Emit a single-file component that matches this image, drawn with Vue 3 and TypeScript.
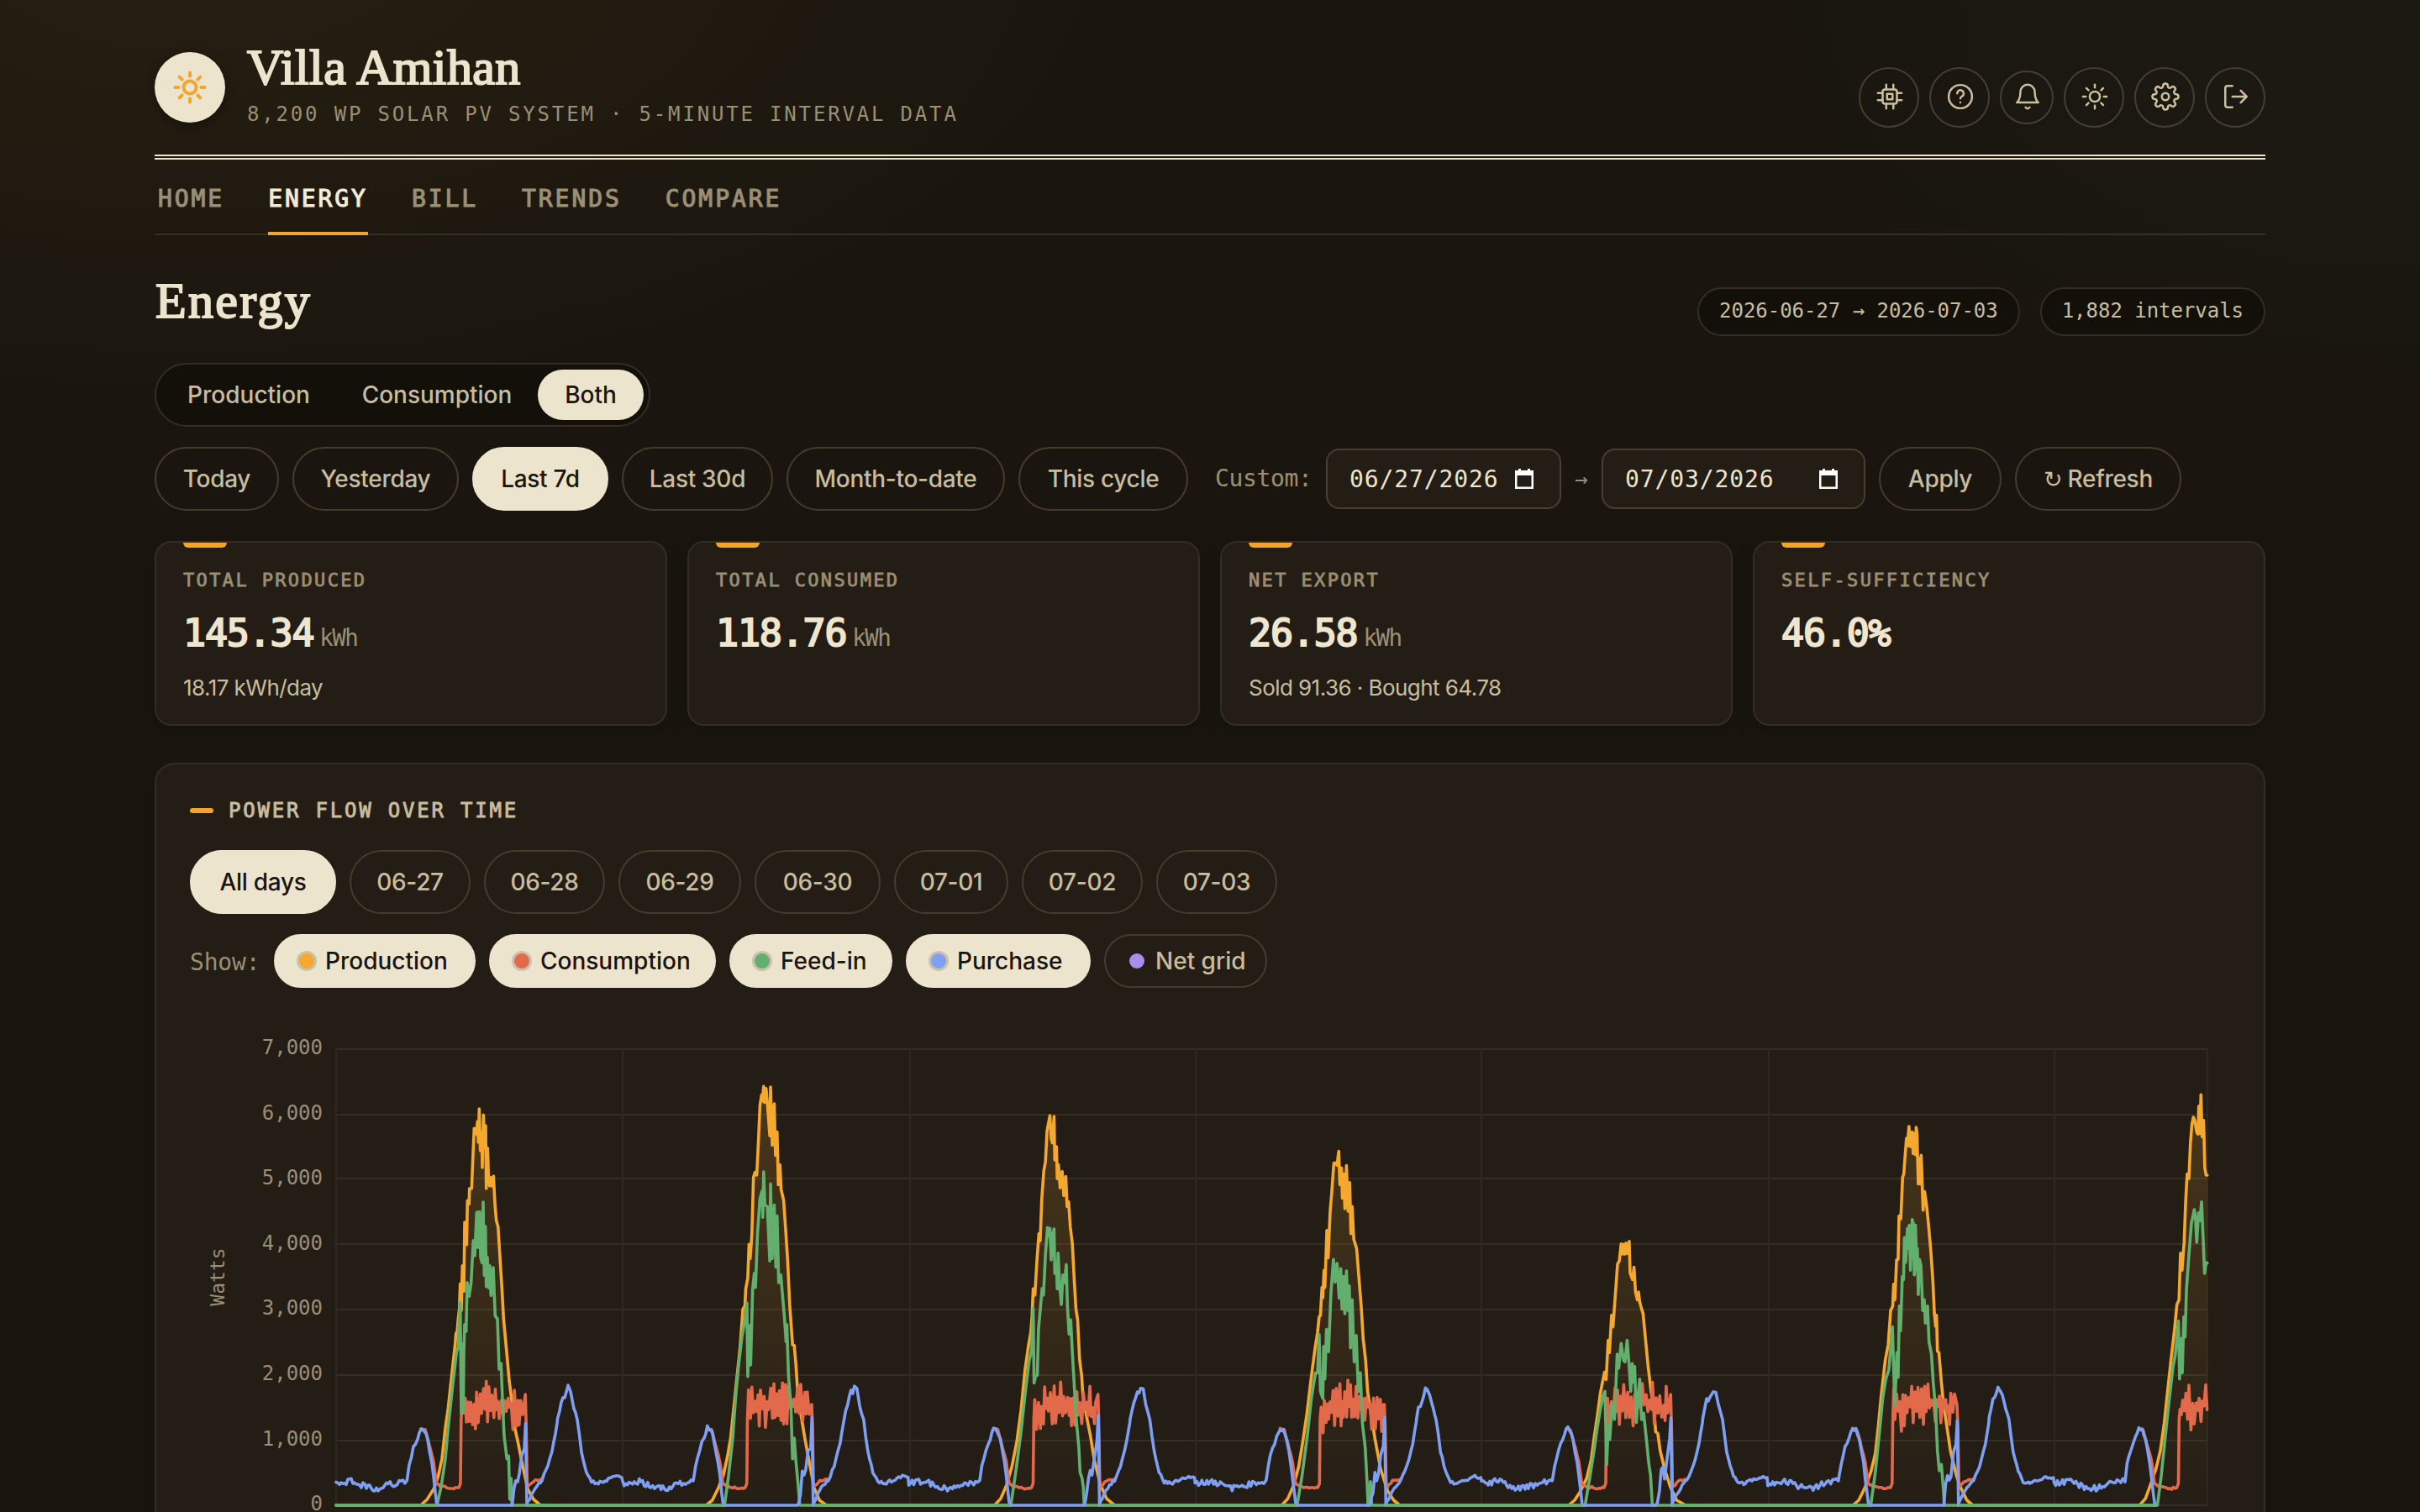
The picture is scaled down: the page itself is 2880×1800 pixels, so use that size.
<script setup lang="ts">
type Point = [number, number]
interface Pill { label: string; width: number; active?: boolean }
interface Toggle extends Pill { color: string }
interface Stat { label: string; value: string; unit?: string; note?: string }
interface Trace { x: number; y: number; sx: number; sy: number; production: number[]; feedIn: number[] }

const tabs: string[] = ['Home', 'Energy', 'Bill', 'Trends', 'Compare']

const modes: Pill[] = [
  { label: 'Production', width: 208 },
  { label: 'Consumption', width: 240 },
  { label: 'Both', width: 126, active: true },
]

const ranges: Pill[] = [
  { label: 'Today', width: 148 },
  { label: 'Yesterday', width: 198 },
  { label: 'Last 7d', width: 162, active: true },
  { label: 'Last 30d', width: 180 },
  { label: 'Month-to-date', width: 260 },
  { label: 'This cycle', width: 202 },
]

const days: Pill[] = [
  { label: 'All days', width: 174, active: true },
  { label: '06-27', width: 144 },
  { label: '06-28', width: 144 },
  { label: '06-29', width: 146 },
  { label: '06-30', width: 150 },
  { label: '07-01', width: 136 },
  { label: '07-02', width: 144 },
  { label: '07-03', width: 144 },
]

const toggles: Toggle[] = [
  { label: 'Production', width: 240, color: '#f5a82e', active: true },
  { label: 'Consumption', width: 270, color: '#e2694a', active: true },
  { label: 'Feed-in', width: 194, color: '#63b06e', active: true },
  { label: 'Purchase', width: 220, color: '#7f9ff2', active: true },
  { label: 'Net grid', width: 194, color: '#a98cec' },
]

const stats: Stat[] = [
  { label: 'Total produced', value: '145.34', unit: 'kWh', note: '18.17 kWh/day' },
  { label: 'Total consumed', value: '118.76', unit: 'kWh' },
  { label: 'Net export', value: '26.58', unit: 'kWh', note: 'Sold 91.36 · Bought 64.78' },
  { label: 'Self-sufficiency', value: '46.0%' },
]

/* Chart geometry, in page pixels; the svg's viewBox starts at the panel's inner edge. */
const LEFT = 400
const RIGHT = 2627
const ZERO = 1792
const DAY = 340.75
const gridY: number[] = [1249, 1327, 1403, 1481, 1559, 1637, 1715, 1792]
const yLabels: string[] = ['7,000', '6,000', '5,000', '4,000', '3,000', '2,000', '1,000', '0']
const gridX: number[] = [400, 741, 1083, 1423, 1763, 2105, 2445, 2627]

const traces: Trace[] = [
  {
    x: 480, y: 1300, sx: 3, sy: 3,
    production: [62,1474,85,1455,110,1415,125,1370,138,1310,150,1200,160,1130,172,1020,185,900,188,862,192,858,196,812,200,775,203,685,207,780,211,620,216,712,219,465,226,545,229,388,235,400,236,345,244,345,249,220,253,130,260,150,265,105,268,180,271,60,275,210,280,145,282,270,286,82,291,200,294,120,296,345,301,200,304,300,308,335,313,305,316,336,322,300,327,400,332,460,338,480,345,590,352,700,358,810,368,920,378,1030,388,1110,398,1200,410,1255,425,1330,445,1420,465,1455,490,1474],
    feedIn: [120,1474,135,1410,150,1310,160,1200,175,1060,190,930,196,910,203,752,207,1148,211,900,214,1140,216,930,219,830,224,855,228,680,235,730,242,680,250,530,255,585,262,430,265,555,267,428,270,555,273,428,276,590,281,610,285,393,289,655,293,480,296,695,300,590,305,700,309,620,313,727,317,640,319,720,321,627,328,800,336,810,342,990,349,970,354,1100,360,1230,370,1310,376,1300,380,1455,385,1380,388,1474],
  },
  {
    x: 220, y: 1220, sx: 2.063, sy: 2.7034,
    production: [1280,1543,1295,1530,1310,1490,1322,1450,1332,1390,1340,1330,1348,1230,1355,1140,1363,1040,1370,915,1375,905,1377,850,1382,815,1385,706,1388,752,1392,680,1396,490,1400,475,1404,484,1408,380,1412,260,1416,225,1418,245,1421,198,1423,250,1427,205,1430,250,1436,357,1438,200,1442,388,1447,254,1450,420,1454,345,1457,515,1461,450,1464,530,1470,565,1475,660,1480,760,1485,900,1492,1030,1496,1032,1500,1090,1505,1190,1512,1250,1522,1330,1532,1400,1545,1490,1558,1530,1575,1543],
    feedIn: [1325,1543,1335,1450,1345,1330,1352,1200,1360,1090,1368,1000,1374,960,1380,895,1382,1132,1386,968,1389,1095,1394,850,1398,800,1401,845,1406,670,1412,560,1417,535,1419,620,1421,473,1424,580,1430,585,1436,760,1438,512,1442,752,1447,580,1451,780,1454,615,1458,830,1463,805,1467,865,1472,940,1476,1020,1478,965,1482,1130,1488,1230,1492,1397,1496,1330,1500,1400,1505,1470,1510,1543],
  },
  {
    x: 980, y: 1220, sx: 2.063, sy: 2.7034,
    production: [420,1543,435,1525,450,1480,463,1420,475,1340,485,1240,495,1110,503,1035,509,990,512,940,515,850,519,870,524,760,529,672,532,695,536,560,541,470,545,440,549,340,556,292,559,365,562,380,566,295,568,435,572,392,574,495,577,450,581,525,586,472,590,550,595,488,598,585,602,570,606,650,611,705,616,830,620,915,624,950,629,1080,634,1130,637,1195,645,1255,655,1320,665,1400,680,1480,695,1525,715,1543],
    feedIn: [460,1543,472,1440,485,1310,495,1190,505,1080,511,1050,515,912,517,1153,521,1130,525,1128,528,980,537,848,540,870,545,740,550,652,553,680,556,655,559,757,562,680,566,657,568,800,572,770,574,850,576,735,580,840,584,900,588,805,592,830,596,772,599,910,603,995,607,950,611,1055,617,1190,621,1275,627,1360,630,1440,635,1460,638,1490,640,1543],
  },
  {
    x: 980, y: 1220, sx: 2.063, sy: 2.7034,
    production: [1125,1543,1140,1525,1155,1480,1167,1420,1177,1340,1187,1250,1198,1130,1207,1040,1213,990,1217,940,1220,935,1224,845,1226,878,1229,790,1231,845,1236,662,1239,750,1244,600,1248,540,1253,445,1258,445,1261,452,1265,407,1268,515,1272,460,1274,558,1277,480,1280,592,1284,453,1288,600,1292,508,1295,672,1298,585,1302,690,1309,720,1315,820,1320,900,1325,1010,1331,1080,1336,1180,1345,1260,1355,1340,1368,1430,1385,1500,1400,1530,1415,1543],
    feedIn: [1163,1543,1175,1450,1188,1320,1198,1200,1208,1120,1213,1120,1217,997,1220,1180,1226,1203,1228,1035,1231,1140,1235,980,1240,1052,1246,860,1252,755,1256,828,1261,768,1266,880,1270,785,1273,915,1277,810,1280,930,1284,792,1288,920,1291,840,1294,1040,1298,885,1303,1085,1308,1000,1313,1180,1318,1120,1323,1280,1330,1360,1335,1480,1337,1543,1343,1470,1346,1543],
  },
  {
    x: 1740, y: 1220, sx: 2.8, sy: 2.7034,
    production: [355,1543,375,1530,395,1500,415,1460,430,1400,440,1330,452,1250,460,1190,468,1150,475,1118,480,1142,487,1015,491,1055,498,935,503,972,510,880,518,770,524,760,530,705,534,738,538,706,542,738,546,702,550,736,557,697,560,800,568,820,573,780,578,860,584,885,588,860,592,892,597,910,603,930,612,1020,620,1100,630,1180,640,1245,645,1310,652,1315,660,1370,675,1430,695,1490,715,1530,745,1543],
    feedIn: [410,1543,425,1460,440,1370,450,1300,460,1240,470,1195,476,1180,482,1415,487,1290,492,1335,500,1220,508,1270,517,1060,522,1105,530,1025,538,1080,543,1085,550,1015,556,1090,562,1180,567,1090,571,1150,575,1100,581,1280,586,1200,592,1140,598,1270,605,1250,615,1340,622,1410,628,1450,634,1543],
  },
  {
    x: 2180, y: 1220, sx: 2.8, sy: 2.7034,
    production: [70,1543,90,1530,110,1490,130,1440,145,1380,155,1290,165,1190,178,1080,184,1050,188,1030,196,920,203,905,206,835,210,885,216,757,221,755,224,615,230,625,236,490,240,480,243,437,249,365,252,390,257,327,262,392,268,345,271,415,275,350,279,418,281,330,284,350,288,512,292,430,295,512,298,420,304,597,309,537,315,575,322,640,330,730,337,830,342,930,346,970,349,935,352,1050,357,1055,365,1150,372,1220,380,1270,395,1370,415,1450,430,1490,450,1530,470,1543],
    feedIn: [130,1543,145,1440,160,1300,170,1200,180,1140,190,1110,202,972,210,1225,217,1055,221,1135,225,905,229,985,235,810,239,820,242,685,246,765,252,655,255,720,258,645,262,790,268,627,272,640,275,805,279,645,283,790,285,720,288,868,292,755,297,775,303,920,308,885,312,960,319,905,324,1020,332,1060,338,1150,346,1240,352,1370,358,1435,365,1415,372,1500,375,1543],
  },
  {
    x: 2180, y: 1220, sx: 2.8, sy: 2.7034,
    production: [1025,1543,1045,1525,1062,1480,1080,1430,1095,1370,1108,1280,1120,1170,1130,1080,1142,980,1150,900,1157,885,1162,735,1167,790,1174,700,1179,570,1184,480,1190,495,1195,380,1200,320,1205,297,1210,310,1216,345,1220,352,1223,262,1226,350,1230,225,1234,360,1239,308,1243,460,1247,484,1251,484],
    feedIn: [1085,1543,1098,1450,1112,1320,1125,1200,1137,1100,1145,1060,1155,953,1159,1140,1164,1010,1168,1120,1173,940,1177,1005,1182,850,1190,740,1198,640,1208,595,1212,625,1216,700,1222,605,1227,630,1232,570,1237,680,1242,800,1247,765,1251,767],
  },
]

let seed = 20260627
const noise = (): number => {
  seed = (seed * 1664525 + 1013904223) % 4294967296
  return (seed / 4294967296) * 2 - 1
}

const decode = (trace: Trace, values: number[]): Point[] => {
  const points: Point[] = []
  for (let i = 0; i < values.length; i += 2) {
    const y = trace.y + values[i + 1] / trace.sy
    points.push([trace.x + values[i] / trace.sx, y > ZERO - 1.6 ? ZERO : y])
  }
  return points
}

/* Walks between anchors in short steps, adding a little jitter. */
const walk = (start: number, anchors: Point[], jitter: number): Point[] => {
  const out: Point[] = []
  for (let i = 0; i < anchors.length - 1; i++) {
    const [x0, y0] = anchors[i]
    const [x1, y1] = anchors[i + 1]
    const steps = Math.max(1, Math.round((x1 - x0) / 2.1))
    for (let s = 0; s < steps; s++) {
      const t = s / steps
      const y = y0 + (y1 - y0) * t
      out.push([start + x0 + (x1 - x0) * t, y >= ZERO - 1 ? ZERO : Math.min(ZERO, y + noise() * jitter)])
    }
  }
  const last = anchors[anchors.length - 1]
  out.push([start + last[0], last[1]])
  return out
}

const path = (points: Point[]): string =>
  points
    .filter((p) => p[0] <= RIGHT)
    .map((p, i) => `${i ? 'L' : 'M'}${p[0].toFixed(1)} ${p[1].toFixed(1)}`)
    .join('')

const withBaseline = (key: 'production' | 'feedIn'): Point[] => {
  const points: Point[] = [[LEFT, ZERO]]
  traces.forEach((trace) => points.push(...decode(trace, trace[key])))
  return points
}

const productionPath = path(withBaseline('production'))
const productionArea = `${productionPath}L${RIGHT} ${ZERO}L${LEFT} ${ZERO}Z`
const feedInPath = path(withBaseline('feedIn'))

const purchase: Point[] = []
const gridIdle: Point[] = []
const consumptionPaths: string[] = []
for (let d = 0; d < 7; d++) {
  const start = LEFT + d * DAY
  purchase.push(
    ...walk(start, [[0, 1766], [10, 1765], [20, 1763], [36, 1770], [50, 1772], [62, 1768], [75, 1765], [84, 1763]], 3.6),
    ...walk(start, [[84.5, 1762], [87, 1744], [92, 1724], [97, 1712], [101, 1700], [105, 1702], [109, 1714], [114, 1742], [120, 1792]], 2.6),
    [start + 208, ZERO],
    ...walk(start, [[209.5, 1790], [214, 1758], [218, 1752], [221, 1728], [224, 1720], [225.5, 1690 + noise() * 6]], 9),
    [start + 227, ZERO],
    ...walk(start, [[228, 1788], [237, 1771], [245, 1762], [252, 1746], [259, 1718], [263, 1694]], 1.6),
    ...walk(start, [[263.5, 1690], [268, 1670], [272, 1659], [276, 1652], [279, 1656], [282, 1672]], 5),
    ...walk(start, [[283, 1676], [287, 1690], [292, 1728], [298, 1752], [304, 1764], [312, 1766]], 1.8),
    ...walk(start, [[312, 1766], [322, 1762], [333, 1758], [340, 1759]], 1.8),
  )
  /* Outside the feed-in window the green baseline stays on top of the purchase series. */
  gridIdle.push([start, start + 119], [start + 229, Math.min(start + DAY, RIGHT)])
  const plateau: Point[] = []
  for (let x = 150, side = 1; x < 223.5; x += 1.3 + Math.abs(noise()) * 1.2) {
    const hump = Math.sin(((x - 149) / 75) * Math.PI) * 10
    plateau.push([start + x, 1680 - hump - side * (2 + Math.pow(Math.abs(noise()), 1.5) * 26)])
    side = -side
  }
  consumptionPaths.push(
    path([
      ...walk(start, [[101, 1701], [106, 1702], [110, 1717], [116, 1740], [119.5, 1766], [127, 1770], [140, 1772], [146, 1771]], 1.2),
      [start + 148, 1766],
      [start + 148.8, 1690],
      ...plateau,
      [start + 225.2, d % 2 ? 1672 : 1660],
      [start + 226.3, 1700],
      [start + 227.4, 1770],
      ...walk(start, [[229, 1769], [235, 1763], [244, 1761]], 1),
    ]),
  )
}
const purchasePath = path(purchase)
const baselinePath = gridIdle
  .filter(([from, to]) => from < to)
  .map(([from, to]) => `M${from.toFixed(1)} ${ZERO}H${to.toFixed(1)}`)
  .join('')
</script>

<template>
  <div class="page">
    <header class="masthead">
      <div class="logo">
        <svg viewBox="0 0 24 24" width="42" height="42">
          <circle cx="12" cy="12" r="4.3" />
          <path d="M12 2v2.4M12 19.6V22M2 12h2.4M19.6 12H22M4.93 4.93l1.77 1.77M17.3 17.3l1.77 1.77M4.93 19.07l1.77-1.77M17.3 6.7l1.77-1.77" />
        </svg>
      </div>
      <div class="brand">
        <h1>Villa Amihan</h1>
        <p>8,200 WP SOLAR PV SYSTEM · 5-MINUTE INTERVAL DATA</p>
      </div>
      <div class="actions">
        <button>
          <svg viewBox="0 0 24 24">
            <rect x="6" y="6" width="12" height="12" rx="2" /><rect x="9.7" y="9.7" width="4.6" height="4.6" />
            <path d="M9 2v4M15 2v4M9 18v4M15 18v4M2 9h4M2 15h4M18 9h4M18 15h4" />
          </svg>
        </button>
        <button>
          <svg viewBox="0 0 24 24">
            <circle cx="12" cy="12" r="9.8" /><path d="M9.3 9.4a2.75 2.75 0 1 1 4.2 2.3c-.9.6-1.5 1-1.5 1.9" /><path d="M12 16.9v.01" />
          </svg>
        </button>
        <button class="small">
          <svg viewBox="0 0 24 24">
            <path d="M18 8A6 6 0 0 0 6 8c0 7-3 9-3 9h18s-3-2-3-9" /><path d="M13.73 21a2 2 0 0 1-3.46 0" />
          </svg>
        </button>
        <button>
          <svg viewBox="0 0 24 24">
            <circle cx="12" cy="12" r="4.3" />
            <path d="M12 2v2.4M12 19.6V22M2 12h2.4M19.6 12H22M4.93 4.93l1.77 1.77M17.3 17.3l1.77 1.77M4.93 19.07l1.77-1.77M17.3 6.7l1.77-1.77" />
          </svg>
        </button>
        <button>
          <svg viewBox="0 0 24 24">
            <circle cx="12" cy="12" r="3" />
            <path d="M19.4 15a1.65 1.65 0 0 0 .33 1.82l.06.06a2 2 0 0 1-2.83 2.83l-.06-.06a1.65 1.65 0 0 0-1.82-.33 1.65 1.65 0 0 0-1 1.51V21a2 2 0 0 1-4 0v-.09A1.65 1.65 0 0 0 9 19.4a1.65 1.65 0 0 0-1.82.33l-.06.06a2 2 0 0 1-2.83-2.83l.06-.06a1.65 1.65 0 0 0 .33-1.82 1.65 1.65 0 0 0-1.51-1H3a2 2 0 0 1 0-4h.09A1.65 1.65 0 0 0 4.6 9a1.65 1.65 0 0 0-.33-1.82l-.06-.06a2 2 0 0 1 2.83-2.83l.06.06a1.65 1.65 0 0 0 1.82.33H9a1.65 1.65 0 0 0 1-1.51V3a2 2 0 0 1 4 0v.09a1.65 1.65 0 0 0 1 1.51 1.65 1.65 0 0 0 1.82-.33l.06-.06a2 2 0 0 1 2.83 2.83l-.06.06a1.65 1.65 0 0 0-.33 1.82V9a1.65 1.65 0 0 0 1.51 1H21a2 2 0 0 1 0 4h-.09a1.65 1.65 0 0 0-1.51 1z" />
          </svg>
        </button>
        <button>
          <svg viewBox="0 0 24 24">
            <path d="M9 21H5a2 2 0 0 1-2-2V5a2 2 0 0 1 2-2h4" /><path d="M16 17l5-5-5-5M21 12H9" />
          </svg>
        </button>
      </div>
    </header>

    <nav class="tabs">
      <a v-for="tab in tabs" :key="tab" :class="{ active: tab === 'Energy' }">{{ tab }}</a>
    </nav>

    <section class="heading">
      <h2>Energy</h2>
      <div class="badges">
        <span>2026-06-27 → 2026-07-03</span>
        <span>1,882 intervals</span>
      </div>
    </section>

    <div class="segment">
      <button v-for="m in modes" :key="m.label" :class="{ active: m.active }" :style="{ width: m.width + 'px' }">{{ m.label }}</button>
    </div>

    <div class="filters">
      <button v-for="r in ranges" :key="r.label" class="pill" :class="{ active: r.active }" :style="{ width: r.width + 'px' }">{{ r.label }}</button>
      <span class="custom">Custom:</span>
      <div class="date">
        <span>06/27/2026</span>
        <svg viewBox="0 0 22 24" width="22" height="24"><path d="M4 0h3v2h8V0h3v2h4v22H0V2h4zM2.5 8v13.5h17V8z" fill-rule="evenodd" /></svg>
      </div>
      <span class="arrow">→</span>
      <div class="date wide">
        <span>07/03/2026</span>
        <svg viewBox="0 0 22 24" width="22" height="24"><path d="M4 0h3v2h8V0h3v2h4v22H0V2h4zM2.5 8v13.5h17V8z" fill-rule="evenodd" /></svg>
      </div>
      <button class="pill apply">Apply</button>
      <button class="pill refresh"><span class="reload">↻</span> Refresh</button>
    </div>

    <section class="stats">
      <article v-for="s in stats" :key="s.label">
        <h3>{{ s.label }}</h3>
        <p class="value">{{ s.value }}<small v-if="s.unit">{{ s.unit }}</small></p>
        <p v-if="s.note" class="note">{{ s.note }}</p>
      </article>
    </section>

    <section class="panel">
      <h3>Power flow over time</h3>
      <div class="row days">
        <button v-for="d in days" :key="d.label" class="pill" :class="{ active: d.active }" :style="{ width: d.width + 'px' }">{{ d.label }}</button>
      </div>
      <div class="row shows">
        <span class="show">Show:</span>
        <button v-for="t in toggles" :key="t.label" class="toggle" :class="{ active: t.active }" :style="{ width: t.width + 'px' }">
          <i :style="{ background: t.color }"></i>{{ t.label }}
        </button>
      </div>
      <svg class="chart" viewBox="226 1216 2428 640" width="2428" height="640">
        <defs>
          <linearGradient id="glow" gradientUnits="userSpaceOnUse" x1="0" y1="1249" x2="0" y2="1792">
            <stop offset="0" stop-color="#f5a82e" stop-opacity="0.2" />
            <stop offset="1" stop-color="#f5a82e" stop-opacity="0.01" />
          </linearGradient>
        </defs>
        <g class="grid">
          <path v-for="y in gridY" :key="'h' + y" :d="`M${LEFT} ${y}H${RIGHT}`" />
          <path v-for="x in gridX" :key="'v' + x" class="vertical" :d="`M${x} 1248V1792`" />
        </g>
        <g class="axis">
          <text v-for="(label, i) in yLabels" :key="label" x="384" :y="1255 + i * 77.6">{{ label }}</text>
          <text class="unit" transform="translate(267 1520) rotate(-90)">Watts</text>
        </g>
        <path :d="productionArea" fill="url(#glow)" />
        <g class="lines">
          <path :d="productionPath" stroke="#f5a82e" />
          <path v-for="(p, i) in consumptionPaths" :key="i" :d="p" stroke="#e2694a" />
          <path :d="feedInPath" stroke="#63b06e" />
          <path :d="purchasePath" stroke="#7f9ff2" />
          <path :d="baselinePath" stroke="#63b06e" />
        </g>
      </svg>
    </section>
  </div>
</template>

<style>
html,
body {
  background: #1a160f;
  overflow: hidden;
}
</style>

<style scoped>
* {
  box-sizing: border-box;
}

.page {
  width: 2880px;
  height: 1800px;
  overflow: hidden;
  padding: 0 184px;
  color: #ede4ce;
  font-family: Inter, sans-serif;
  background:
    radial-gradient(1600px 800px at 8% -4%, rgba(245, 166, 46, 0.06), transparent 70%),
    radial-gradient(1200px 700px at 100% 0, rgba(70, 140, 110, 0.035), transparent 70%),
    #1a160f;
}

h1, h2, h3, p { margin: 0; }

button {
  padding: 0;
  border: 0;
  background: none;
  color: inherit;
  font: inherit;
  white-space: nowrap;
}

.masthead {
  display: flex;
  align-items: flex-start;
  height: 190px;
  border-bottom: 6px double #ede4ce;
}

.logo {
  display: grid;
  place-items: center;
  width: 84px;
  height: 84px;
  margin-top: 62px;
  border-radius: 50%;
  background: #ede4ce;
  box-shadow: 0 4px 14px rgba(0, 0, 0, 0.35);
}

.logo svg {
  fill: none;
  stroke: #f2a42c;
  stroke-width: 2.2;
  stroke-linecap: round;
}

.brand {
  margin: 44px 0 0 26px;
}

h1, h2 {
  font-family: "Liberation Serif", serif;
  font-weight: 400;
  font-size: 60px;
  line-height: 72px;
  -webkit-text-stroke: 2px currentColor;
}

h1 { letter-spacing: 0.35px; }
h2 { letter-spacing: 2.3px; text-indent: 1px; }

.brand p {
  margin-top: 5px;
  color: #9b8f74;
  font: 24px/30px "DejaVu Sans Mono", monospace;
  letter-spacing: 2.83px;
}

.actions {
  display: flex;
  align-items: center;
  gap: 12px;
  height: 72px;
  margin: 80px 0 0 auto;
}

.actions button {
  display: grid;
  place-items: center;
  width: 72px;
  height: 72px;
  padding: 0 0 2px 2px;
  border: 2px solid #463e30;
  border-radius: 50%;
}

.actions .small {
  width: 64px;
  height: 64px;
}

.actions svg {
  width: 34px;
  height: 34px;
  fill: none;
  stroke: #cabf9f;
  stroke-width: 1.75;
  stroke-linecap: round;
  stroke-linejoin: round;
}

.tabs {
  display: flex;
  gap: 52px;
  height: 90px;
  padding: 0 4px;
  border-bottom: 2px solid #353027;
}

.tabs a {
  height: 90px;
  color: #9b8f74;
  font: 28px/93px "DejaVu Sans Mono", monospace;
  letter-spacing: 2.93px;
  text-transform: uppercase;
  -webkit-text-stroke: 1.1px currentColor;
}

.tabs .active {
  color: #f4ecd8;
  border-bottom: 4px solid #f2a42c;
}

.heading {
  display: flex;
  justify-content: space-between;
  height: 152px;
}

.heading h2 {
  margin-top: 42px;
}

.badges {
  display: flex;
  gap: 24px;
  padding-top: 62px;
}

.badges span {
  height: 58px;
  padding: 0 24px;
  border: 2px solid #332d22;
  border-radius: 29px;
  background: #13100a;
  color: #c8bd9f;
  font: 24px/53px "DejaVu Sans Mono", monospace;
  letter-spacing: -0.03px;
}

.segment {
  display: flex;
  width: 590px;
  height: 76px;
  padding: 6px;
  border: 2px solid #332d22;
  border-radius: 38px;
  background: #13100a;
  font-size: 28px;
  font-weight: 500;
  letter-spacing: -0.5px;
  color: #c8bd9f;
}

.segment button {
  height: 60px;
  border-radius: 30px;
}

.segment .active {
  background: #ede4ce;
  color: #1a140c;
}

.filters {
  display: flex;
  align-items: center;
  gap: 16px;
  height: 76px;
  margin-top: 24px;
}

.pill {
  flex: none;
  height: 76px;
  border: 2px solid #463c2d;
  border-radius: 38px;
  color: #c8bd9f;
  font-size: 28px;
  font-weight: 500;
  letter-spacing: -0.3px;
}

.pill.active {
  border-color: #ede4ce;
  background: #ede4ce;
  color: #1a140c;
}

.custom, .show, .arrow {
  color: #9b8f74;
  font: 28px/40px "DejaVu Sans Mono", monospace;
  letter-spacing: -0.2px;
}

.custom {
  width: 116px;
  margin-left: 16px;
  letter-spacing: -0.35px;
}

.arrow {
  width: 16px;
  font-size: 26px;
}

.date {
  display: flex;
  align-items: center;
  justify-content: space-between;
  width: 280px;
  height: 72px;
  padding: 0 31px 0 26px;
  border: 2px solid #4a3e2e;
  border-radius: 16px;
  background: #231d16;
  font: 28px/69px "DejaVu Sans Mono", monospace;
  letter-spacing: 0.9px;
}

.date.wide { width: 314px; }
.date svg { fill: #fff; }
.apply { width: 146px; }
.refresh { width: 198px; }

.reload {
  margin-right: -1px;
  font: 27px "DejaVu Sans", sans-serif;
}

.stats {
  display: flex;
  gap: 24px;
  margin-top: 36px;
}

.stats article {
  position: relative;
  width: 610px;
  height: 220px;
  padding: 32px 32px 0;
  border: 2px solid #332d24;
  border-radius: 20px;
  background: #231d16;
  box-shadow: 0 6px 20px rgba(0, 0, 0, 0.25);
}

.stats article::before {
  content: "";
  position: absolute;
  top: 0;
  left: 32px;
  width: 52px;
  height: 6px;
  border-radius: 0 0 6px 6px;
  background: #f2a42c;
}

.stats h3 {
  color: #9b8f74;
  font: 22px/26px "DejaVu Sans Mono", monospace;
  letter-spacing: 2.36px;
  text-transform: uppercase;
  -webkit-text-stroke: 0.8px currentColor;
}

.value {
  margin-top: 22px;
  color: #efe6d0;
  font: 45px/56px "DejaVu Sans Mono", monospace;
  letter-spacing: -1.2px;
  -webkit-text-stroke: 2px currentColor;
}

.value small {
  margin-left: 7px;
  color: #9b8f74;
  font: 27.5px "DejaVu Sans Mono", monospace;
  letter-spacing: -1.6px;
  -webkit-text-stroke: 0;
}

.note {
  margin-top: 21px;
  color: #c8bd9f;
  font-size: 26px;
  line-height: 32px;
  letter-spacing: -0.55px;
}

.panel {
  height: 1000px;
  margin-top: 44px;
  padding: 0 40px;
  border: 2px solid #332d24;
  border-radius: 24px;
  background: #231d16;
  box-shadow: 0 6px 20px rgba(0, 0, 0, 0.25);
}

.panel h3 {
  display: flex;
  align-items: center;
  gap: 18px;
  height: 30px;
  margin-top: 40px;
  color: #c8bd9f;
  font: 24px/28px "DejaVu Sans Mono", monospace;
  letter-spacing: 2.8px;
  text-transform: uppercase;
  -webkit-text-stroke: 0.9px currentColor;
}

.panel h3::before {
  content: "";
  width: 28px;
  height: 6px;
  border-radius: 3px;
  background: #f2a42c;
}

.row {
  display: flex;
  align-items: center;
  gap: 16px;
}

.days { margin-top: 32px; }
.shows { margin-top: 24px; height: 64px; }
.show { width: 84px; padding-top: 4px; }

.toggle {
  display: flex;
  align-items: center;
  gap: 13px;
  height: 64px;
  padding-left: 28px;
  border: 2px solid #463c2d;
  border-radius: 32px;
  color: #c8bd9f;
  font-size: 28px;
  font-weight: 500;
}

.toggle.active {
  border-color: #ede4ce;
  background: #ede4ce;
  color: #1a140c;
}

.toggle i {
  width: 18px;
  height: 18px;
  border-radius: 50%;
}

.toggle.active i { box-shadow: 0 0 0 3px #c9c1ac; }

.chart {
  display: block;
  margin-top: 40px;
}

.grid path {
  stroke: #332d25;
  stroke-width: 2;
}

.grid .vertical { stroke: #2e2820; }

.axis text {
  fill: #9b8f74;
  font: 24px "DejaVu Sans Mono", monospace;
  text-anchor: end;
}

.axis .unit {
  font-size: 23px;
  text-anchor: middle;
}

.lines path {
  fill: none;
  stroke-width: 3.6;
  stroke-linejoin: round;
  stroke-linecap: round;
}
</style>
